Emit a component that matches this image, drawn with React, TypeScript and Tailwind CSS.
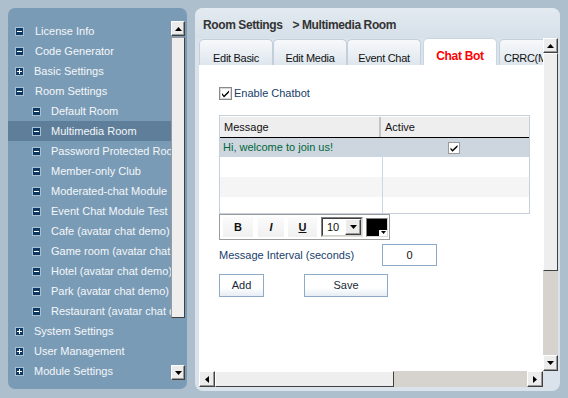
import React from 'react';

type Dir = 'up' | 'down' | 'left' | 'right';

function Arrow({ dir }: { dir: Dir }) {
  const vert = dir === 'up' || dir === 'down';
  const w = vert ? 7 : 4;
  const h = vert ? 4 : 7;
  const pts: Record<Dir, string> = {
    up: '0,4 7,4 3.5,0',
    down: '0,0 7,0 3.5,4',
    left: '4,0 4,7 0,3.5',
    right: '0,0 0,7 4,3.5',
  };
  return (
    <svg width={w} height={h} viewBox={`0 0 ${w} ${h}`}>
      <polygon points={pts[dir]} fill="#000" />
    </svg>
  );
}

function SBtn({ dir, className = '' }: { dir: Dir; className?: string }) {
  return (
    <div
      className={`flex items-center justify-center bg-[#ececec] border border-t-[#ffffff] border-l-[#ffffff] border-r-[#404040] border-b-[#404040] shadow-[inset_-1px_-1px_0_#9a9a9a] ${className}`}
    >
      <Arrow dir={dir} />
    </div>
  );
}

function TreeIcon({ plus }: { plus?: boolean }) {
  return (
    <svg width="9" height="9" viewBox="0 0 9 9" className="shrink-0">
      <rect x="0.5" y="0.5" width="8" height="8" fill="#0f3963" stroke="#a9bfd2" strokeWidth="1" />
      <rect x="1" y="1" width="7" height="7" fill="#0f3963" />
      <rect x="2" y="4" width="5" height="1" fill="#ffffff" />
      {plus && <rect x="4" y="2" width="1" height="5" fill="#ffffff" />}
    </svg>
  );
}

function CheckBox() {
  return (
    <svg width="13" height="13" viewBox="0 0 13 13" className="shrink-0">
      <rect x="0" y="0" width="13" height="13" fill="#8a8a8a" />
      <rect x="1" y="1" width="11" height="11" fill="#d8d8d8" />
      <rect x="2" y="2" width="9" height="9" fill="#ffffff" />
      <path d="M3 6 L5 8.5 L10 3.5 L10 5.5 L5 10.5 L3 8 Z" fill="#000" />
    </svg>
  );
}

function SmallCheck() {
  return (
    <svg width="12" height="12" viewBox="0 0 12 12">
      <rect x="0" y="0" width="12" height="12" fill="#9a9a9a" />
      <rect x="1" y="1" width="10" height="10" fill="#ffffff" />
      <path d="M2.5 5.5 L4.5 7.8 L9.5 3 L9.5 5 L4.5 9.8 L2.5 7.5 Z" fill="#000" />
    </svg>
  );
}

const items: { label: string; level: number; plus?: boolean; selected?: boolean }[] = [
  { label: 'License Info', level: 0 },
  { label: 'Code Generator', level: 0 },
  { label: 'Basic Settings', level: 0, plus: true },
  { label: 'Room Settings', level: 0 },
  { label: 'Default Room', level: 1 },
  { label: 'Multimedia Room', level: 1, selected: true },
  { label: 'Password Protected Room', level: 1 },
  { label: 'Member-only Club', level: 1 },
  { label: 'Moderated-chat Module', level: 1 },
  { label: 'Event Chat Module Test', level: 1 },
  { label: 'Cafe (avatar chat demo)', level: 1 },
  { label: 'Game room (avatar chat demo)', level: 1 },
  { label: 'Hotel (avatar chat demo)', level: 1 },
  { label: 'Park (avatar chat demo)', level: 1 },
  { label: 'Restaurant (avatar chat demo)', level: 1 },
  { label: 'System Settings', level: 0, plus: true },
  { label: 'User Management', level: 0, plus: true },
  { label: 'Module Settings', level: 0, plus: true },
];

const tabs = ['Edit Basic', 'Edit Media', 'Event Chat', 'Chat Bot', 'CRRC(Multi)'];

export default function App() {
  return (
    <div className="w-[568px] h-[398px] bg-[#adbecd] flex items-start pl-[8px] pt-[8px] gap-[8px] overflow-hidden font-['Liberation_Sans',Arial,sans-serif] text-[11px]">
      {/* Sidebar */}
      <div className="w-[179px] h-[381px] bg-[#7a9bb5] rounded-[7px] flex pt-[13px] pb-[9px] pr-[2px] shrink-0">
        <div className="w-[163px] overflow-hidden flex flex-col">
          {items.map((it) => (
            <div
              key={it.label}
              className={`h-[20px] flex items-center whitespace-nowrap text-[#f4f7fa] ${it.selected ? 'bg-[#5e7e99]' : ''} ${it.level === 0 ? 'pl-[7px]' : 'pl-[24px]'}`}
            >
              <TreeIcon plus={it.plus} />
              <span className={`${it.level === 0 && !it.plus ? 'ml-[11px]' : 'ml-[10px]'} leading-[20px]`}>{it.label}</span>
            </div>
          ))}
        </div>
        <div className="w-[14px] flex flex-col">
          <SBtn dir="up" className="h-[15px]" />
          <div className="h-[281px] mt-[1px] bg-[#eeeeee] border border-[#9a9a9a] border-r-[#404040] border-b-[#404040]" />
          <div className="flex-1" />
          <SBtn dir="down" className="h-[15px]" />
        </div>
      </div>

      {/* Right panel */}
      <div className="w-[365px] h-[383px] bg-[#dae3eb] rounded-[8px] flex flex-col shrink-0 overflow-hidden">
        <div className="h-[30px] shrink-0 flex items-center pl-[8px] pt-[3px] bg-[linear-gradient(#e3eaf0,#d6e0e9)] text-[#333333] font-bold text-[12px] tracking-[-0.4px] whitespace-nowrap">
          <span>Room Settings</span>
          <span className="ml-[10px]">&gt; Multimedia Room</span>
        </div>
        <div className="flex-1 flex flex-col ml-[4px] mr-[2px] mb-[4px]">
          <div className="flex-1 flex min-h-0">
            <div className="w-[344px] flex flex-col overflow-hidden">
              {/* tabs */}
              <div className="h-[27px] flex shrink-0 whitespace-nowrap">
                {tabs.map((t, i) => {
                  const active = t === 'Chat Bot';
                  return (
                    <div
                      key={t}
                      className={`w-[74px] shrink-0 h-[27px] rounded-t-[5px] border border-b-0 text-center ${
                        active
                          ? 'bg-white border-[#c9d5e0] mx-[2px] pt-[11px] text-[12px] font-bold text-[#ff0000] tracking-[-0.3px]'
                          : 'mt-[1px] h-[26px] bg-[linear-gradient(#f7f9fb,#dde5ed)] border-[#c3cfdb] pt-[12px] text-[11px] text-[#111111] tracking-[-0.3px]'
                      } ${i === 4 ? 'text-left pl-[4px]' : ''}`}
                    >
                      <span className="leading-[13px] block overflow-hidden">{t}</span>
                    </div>
                  );
                })}
              </div>
              {/* white content */}
              <div className="flex-1 bg-white pl-[20px] pt-[22px] flex flex-col">
                <div className="h-[13px] flex items-center">
                  <CheckBox />
                  <span className="ml-[2px] text-[#18406b]">Enable Chatbot</span>
                </div>

                {/* table */}
                <div className="mt-[15px] w-[311px] h-[99px] border border-[#c5d0da] flex flex-col">
                  <div className="h-[21px] flex bg-[#eeeeee] border-t border-t-[#ffffff] text-[#111111]">
                    <div className="w-[161px] pl-[4px] flex items-center border-r-2 border-r-[#c4c4c4]">Message</div>
                    <div className="flex-1 pl-[4px] flex items-center">Active</div>
                  </div>
                  <div className="h-[1px] bg-black" />
                  <div className="flex-1 flex flex-col">
                    <div className="h-[19px] flex bg-[#cdd6de]">
                      <div className="w-[163px] pl-[3px] flex items-center text-[#00663a] border-r border-r-[#c9d8e6]">
                        Hi, welcome to join us!
                      </div>
                      <div className="flex-1 flex items-center justify-center pr-[4px]">
                        <SmallCheck />
                      </div>
                    </div>
                    <div className="h-[20px] flex bg-white">
                      <div className="w-[163px] border-r border-r-[#c9d8e6]" />
                    </div>
                    <div className="h-[20px] flex bg-[#f5f5f5]">
                      <div className="w-[163px] border-r border-r-[#c9d8e6]" />
                    </div>
                    <div className="flex-1 flex bg-white">
                      <div className="w-[163px] border-r border-r-[#c9d8e6]" />
                    </div>
                  </div>
                </div>

                {/* toolbar */}
                <div className="w-[171px] h-[26px] border border-[#9c9c9c] bg-white flex items-center pl-[3px]">
                  <div className="w-[30px] h-[20px] bg-[linear-gradient(#fbfbfb,#f0f0f0)] flex items-center justify-center font-bold text-[11px] text-[#111]">B</div>
                  <div className="ml-[5px] w-[26px] h-[20px] bg-[linear-gradient(#fbfbfb,#f0f0f0)] flex items-center justify-center font-bold italic text-[11px] text-[#111]">I</div>
                  <div className="ml-[4px] w-[29px] h-[20px] bg-[linear-gradient(#fbfbfb,#f0f0f0)] flex items-center justify-center font-bold underline text-[11px] text-[#111]">U</div>
                  <div className="ml-[4px] w-[42px] h-[20px] flex border border-t-[#808080] border-l-[#808080] border-r-[#e0e0e0] border-b-[#e0e0e0]">
                    <div className="flex-1 flex border border-t-[#404040] border-l-[#404040] border-r-[#d4d0c8] border-b-[#d4d0c8] bg-white">
                      <span className="flex-1 pl-[4px] leading-[16px] text-[11px] text-[#111]">10</span>
                      <SBtn dir="down" className="w-[16px] h-[16px]" />
                    </div>
                  </div>
                  <div className="ml-[3px] w-[22px] h-[19px] relative border border-t-[#808080] border-l-[#808080] border-r-[#d8d8d8] border-b-[#d8d8d8] bg-black">
                    <div className="absolute right-[0px] bottom-[0px] w-[8px] h-[6px] bg-white flex items-center justify-center">
                      <svg width="5" height="3" viewBox="0 0 5 3"><polygon points="0,0 5,0 2.5,3" fill="#000" /></svg>
                    </div>
                  </div>
                </div>

                {/* interval */}
                <div className="mt-[4px] h-[22px] flex items-center">
                  <span className="w-[163px] text-[#18406b]">Message Interval (seconds)</span>
                  <div className="w-[55px] h-[22px] border border-[#8eaac4] flex items-center justify-center text-[#111]">0</div>
                </div>

                {/* buttons */}
                <div className="mt-[8px] flex">
                  <div className="w-[45px] h-[23px] border border-[#8eaac4] bg-[linear-gradient(#ffffff,#ffffff_60%,#e6edf3)] flex items-center justify-center text-[#1a2a3a]">Add</div>
                  <div className="ml-[40px] w-[84px] h-[23px] border border-[#8eaac4] bg-[linear-gradient(#ffffff,#ffffff_60%,#e6edf3)] flex items-center justify-center text-[#1a2a3a]">Save</div>
                </div>
              </div>
            </div>
            {/* vertical scrollbar */}
            <div className="w-[15px] flex flex-col">
              <SBtn dir="up" className="h-[15px]" />
              <div className="h-[218px] bg-[#eeeeee] border border-t-[#ffffff] border-l-[#ffffff] border-r-[#404040] border-b-[#404040]" />
              <div className="flex-1 bg-[#d6d3ce]" />
              <SBtn dir="down" className="h-[16px]" />
            </div>
          </div>
          {/* horizontal scrollbar */}
          <div className="h-[16px] flex shrink-0">
            <div className="w-[344px] flex">
              <SBtn dir="left" className="w-[16px]" />
              <div className="w-[179px] bg-[#eeeeee] border border-t-[#ffffff] border-l-[#ffffff] border-r-[#404040] border-b-[#404040]" />
              <div className="flex-1 bg-[#d6d3ce]" />
              <SBtn dir="right" className="w-[16px]" />
            </div>
            <div className="flex-1" />
          </div>
        </div>
      </div>
    </div>
  );
}
